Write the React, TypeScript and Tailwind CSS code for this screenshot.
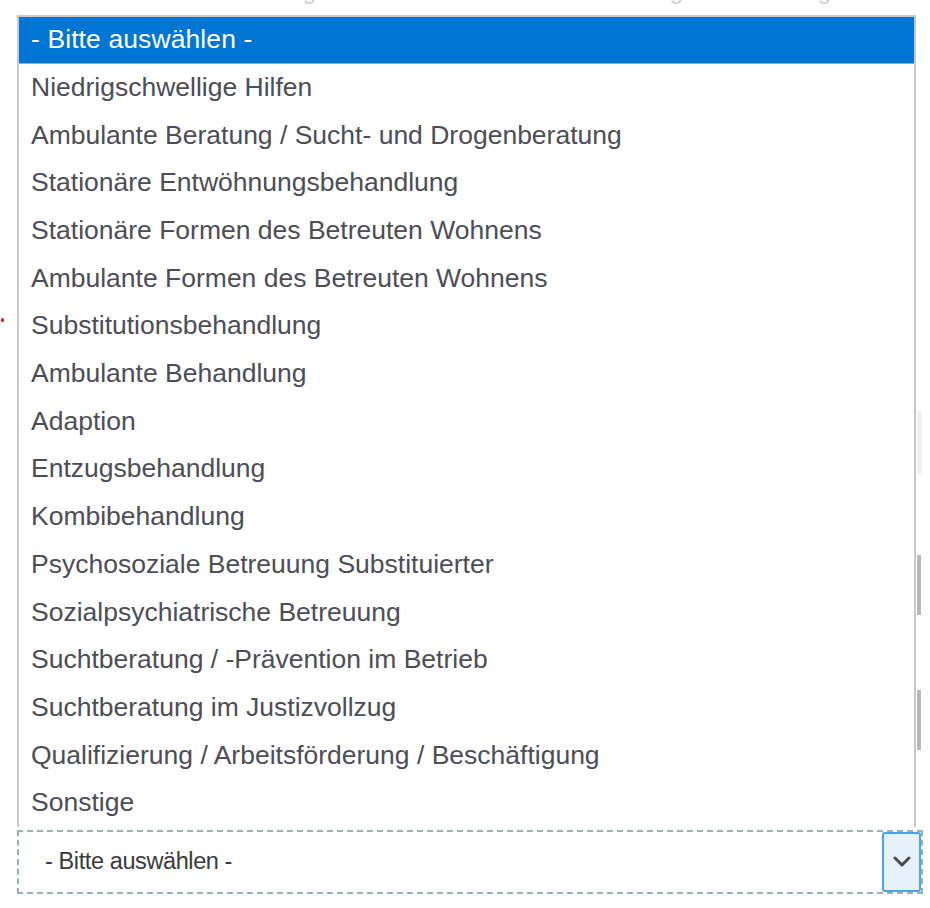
import React from "react";

const items = [
  "Niedrigschwellige Hilfen",
  "Ambulante Beratung / Sucht- und Drogenberatung",
  "Stationäre Entwöhnungsbehandlung",
  "Stationäre Formen des Betreuten Wohnens",
  "Ambulante Formen des Betreuten Wohnens",
  "Substitutionsbehandlung",
  "Ambulante Behandlung",
  "Adaption",
  "Entzugsbehandlung",
  "Kombibehandlung",
  "Psychosoziale Betreuung Substituierter",
  "Sozialpsychiatrische Betreuung",
  "Suchtberatung / -Prävention im Betrieb",
  "Suchtberatung im Justizvollzug",
  "Qualifizierung / Arbeitsförderung / Beschäftigung",
  "Sonstige",
];

export default function App() {
  return (
    <div
      className="w-[930px] h-[908px] bg-white overflow-hidden flex flex-col"
      style={{ fontFamily: '"Liberation Sans", Arial, sans-serif' }}
    >
      <div className="h-[4px] overflow-hidden">
        <div className="text-[24px] leading-[24px] -mt-[21px] pl-[12px] text-[#cfcfcf] whitespace-nowrap">
          Bitte wählen Sie aus der folgenden Liste die Art der Einrichtung bzw. das Angebot der Suchthilfe aus
        </div>
      </div>
      <div className="flex flex-row pt-[11px]">
        <div className="w-[17px] flex flex-col">
          <div className="mt-[303px] ml-[1px] w-[3px] h-[4px] rounded-full bg-[#d21a2c]" />
        </div>
        <div className="flex flex-col w-[906px]">
          <div className="flex flex-row">
            <div className="w-[899px] border-t-[2px] border-l-[2px] border-r-[2px] border-[#c9c9c9] flex flex-col">
              <div className="h-[47px] bg-[#0075d4] flex items-center pl-[12px] text-white text-[26.5px] border-b-[1px] border-[#7ab3e6] tracking-[0.1px]">
                - Bitte auswählen -
              </div>
              {items.map((t) => (
                <div
                  key={t}
                  className="h-[47.7px] flex items-center pl-[12px] text-[26.5px] text-[#4d4d57] whitespace-nowrap"
                >
                  {t}
                </div>
              ))}
            </div>
            <div className="flex flex-col w-[7px]">
              <div className="mt-[396px] h-[64px] w-[5px] ml-[1px] bg-[#f1f1f3] rounded-r-[2px]" />
              <div className="mt-[80px] h-[60px] w-[4px] ml-[1px] bg-[#b9b9bd]" />
              <div className="mt-[75px] h-[60px] w-[4px] ml-[1px] bg-[#b9b9bd]" />
            </div>
          </div>
          <div className="mt-[3px] h-[64px] w-[906px] border-[2px] border-dashed border-[#93b5aa] flex flex-row items-stretch bg-white">
            <div className="flex-1 flex items-center pl-[26px] text-[23.5px] text-[#3a3a3a] tracking-[-0.4px]">
              - Bitte auswählen -
            </div>
            <div className="w-[39px] bg-[#e6f1fb] border-[2px] border-[#4ba3ec] rounded-[3px] flex items-center justify-center">
              <svg width="20" height="12" viewBox="0 0 20 12">
                <path d="M3 2 L10 9 L17 2" fill="none" stroke="#4a4a4a" strokeWidth="3" strokeLinecap="round" strokeLinejoin="round" />
              </svg>
            </div>
          </div>
        </div>
      </div>
    </div>
  );
}
